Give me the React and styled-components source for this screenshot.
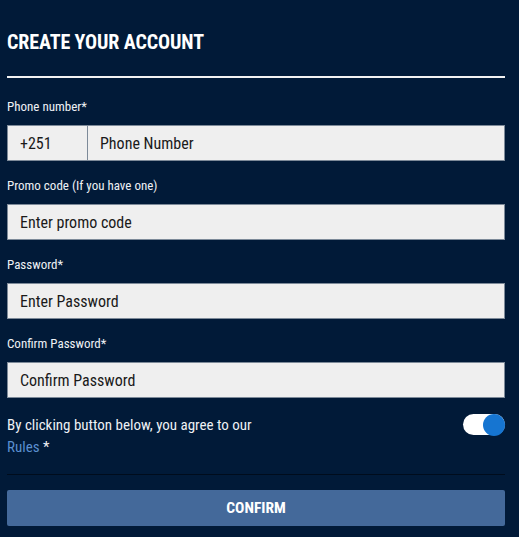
import React, { useState } from "react";
import styled, { createGlobalStyle } from "styled-components";

const GlobalStyle = createGlobalStyle`
  html, body {
    margin: 0;
    padding: 0;
    background-color: #011a38;
  }
  body {
    font-family: "Roboto Condensed", Roboto, "Liberation Sans", sans-serif;
    font-stretch: 80%;
    color: #ffffff;
  }
`;

const Wrapper = styled.div`
  box-sizing: border-box;
  width: 519px;
  min-height: 537px;
  padding: 0 14px 0 7px;
  background-color: #011a38;
`;

const Title = styled.h2`
  margin: 0;
  padding-top: 31px;
  padding-bottom: 23px;
  font-size: 20px;
  line-height: 22px;
  font-weight: 700;
  letter-spacing: -0.1px;
  color: #ffffff;
  border-bottom: 2px solid #f2f2f2;
`;

const Form = styled.form`
  display: flex;
  flex-direction: column;
  padding-top: 22px;
`;

const Field = styled.div`
  display: flex;
  flex-direction: column;
  gap: 11px;
  margin-bottom: ${(p) => (p.$last ? "16px" : "18px")};
`;

const Label = styled.label`
  font-size: 13px;
  line-height: 14px;
  color: #eef1f5;
`;

const InputGroup = styled.div`
  display: flex;
  height: 36px;
  box-sizing: border-box;
  border: 1px solid #7d8a99;
  background-color: #efefef;
`;

const Prefix = styled.div`
  display: flex;
  align-items: center;
  width: 80px;
  padding-left: 12px;
  box-sizing: border-box;
  border-right: 1px solid #7d8a99;
  font-size: 16px;
  color: #1a1a1a;
`;

const Input = styled.input`
  flex: 1;
  min-width: 0;
  border: none;
  outline: none;
  background: transparent;
  padding: 0 12px;
  font-family: inherit;
  font-stretch: inherit;
  font-size: 16px;
  color: #1a1a1a;
  &::placeholder {
    color: #1a1a1a;
    opacity: 1;
  }
`;

const AgreeRow = styled.div`
  display: flex;
  justify-content: space-between;
  align-items: flex-start;
  padding-bottom: 16px;
  border-bottom: 1px solid #000c1c;
`;

const AgreeText = styled.p`
  margin: 0;
  font-size: 15px;
  line-height: 22px;
  color: #eef1f5;
`;

const RulesLink = styled.a`
  color: #5b8fd0;
  text-decoration: none;
`;

const Toggle = styled.button`
  display: flex;
  align-items: center;
  justify-content: ${(p) => (p.$on ? "flex-end" : "flex-start")};
  width: 42px;
  height: 21px;
  margin-top: 0;
  padding: 0;
  border: none;
  border-radius: 11px;
  background-color: #ffffff;
  cursor: pointer;
`;

const Knob = styled.span`
  display: block;
  width: 22px;
  height: 22px;
  border-radius: 50%;
  background-color: ${(p) => (p.$on ? "#1675d1" : "#9aa5b1")};
`;

const ConfirmButton = styled.button`
  margin-top: 15px;
  height: 36px;
  border: none;
  border-radius: 2px;
  background-color: #44699a;
  color: #ffffff;
  font-family: inherit;
  font-stretch: inherit;
  font-size: 15.5px;
  font-weight: 700;
  cursor: pointer;
`;

function App() {
  const [agreed, setAgreed] = useState(true);

  return (
    <Wrapper>
      <GlobalStyle />
      <Title>CREATE YOUR ACCOUNT</Title>
      <Form onSubmit={(e) => e.preventDefault()}>
        <Field>
          <Label>Phone number*</Label>
          <InputGroup>
            <Prefix>+251</Prefix>
            <Input placeholder="Phone Number" />
          </InputGroup>
        </Field>
        <Field>
          <Label>Promo code (If you have one)</Label>
          <InputGroup>
            <Input placeholder="Enter promo code" />
          </InputGroup>
        </Field>
        <Field>
          <Label>Password*</Label>
          <InputGroup>
            <Input type="password" placeholder="Enter Password" />
          </InputGroup>
        </Field>
        <Field $last>
          <Label>Confirm Password*</Label>
          <InputGroup>
            <Input type="password" placeholder="Confirm Password" />
          </InputGroup>
        </Field>
        <AgreeRow>
          <AgreeText>
            By clicking button below, you agree to our
            <br />
            <RulesLink href="#">Rules</RulesLink> *
          </AgreeText>
          <Toggle type="button" $on={agreed} onClick={() => setAgreed(!agreed)}>
            <Knob $on={agreed} />
          </Toggle>
        </AgreeRow>
        <ConfirmButton type="submit">CONFIRM</ConfirmButton>
      </Form>
    </Wrapper>
  );
}

export default App;
